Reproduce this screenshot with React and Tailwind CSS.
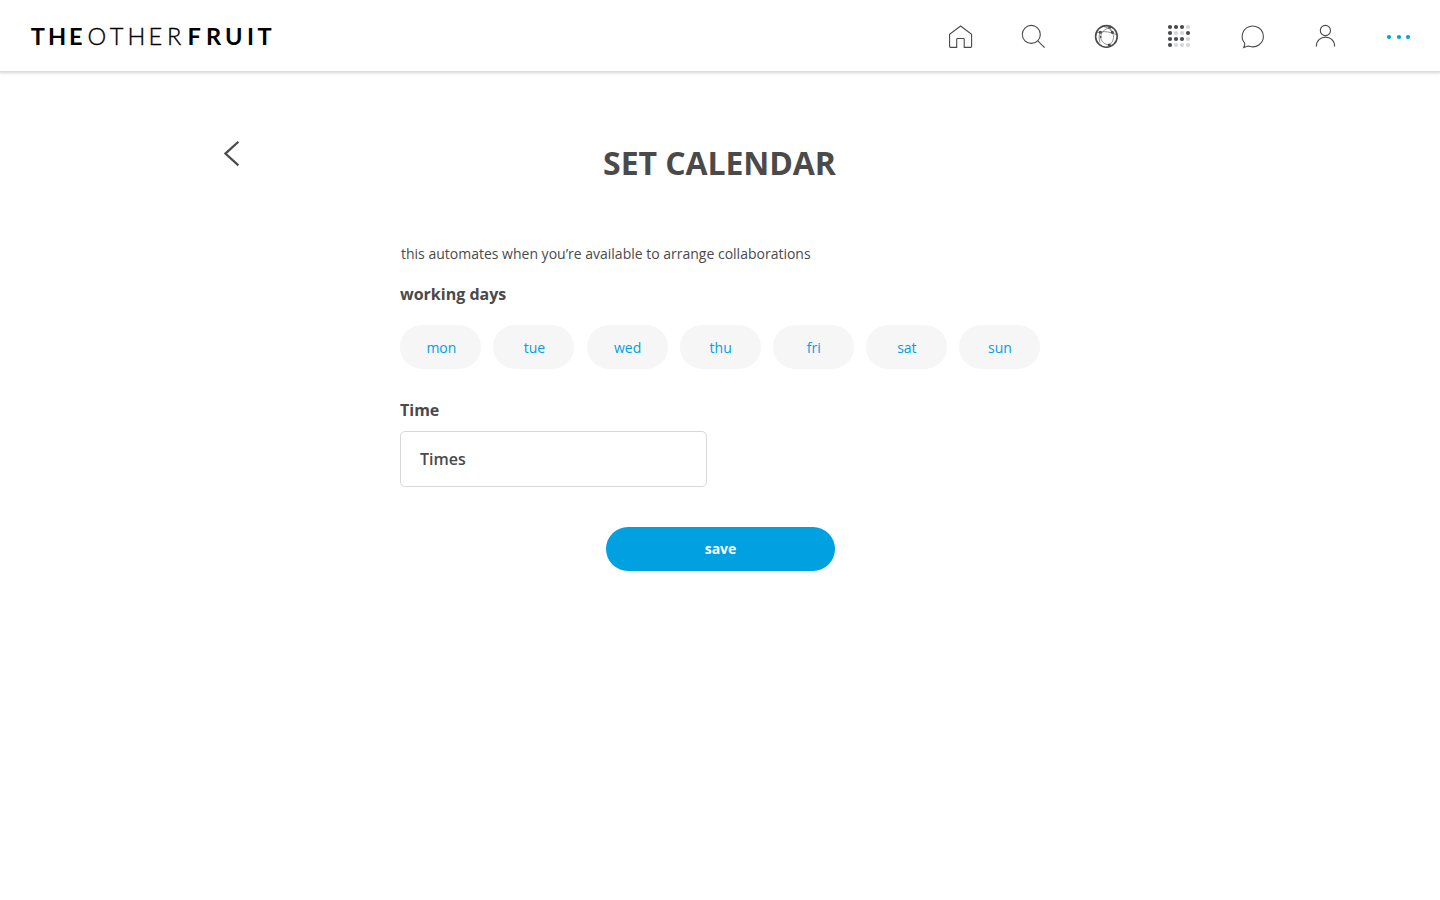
const DAYS = ["mon", "tue", "wed", "thu", "fri", "sat", "sun"];

const GRID = ["1110", "1001", "1110", "1000"];

function Icon({ label, children }) {
  return (
    <a href="#" aria-label={label} className="block h-[25px] w-[25px]">
      <svg width="25" height="25" viewBox="0 0 25 25" fill="none" stroke="#4a4a4a" strokeWidth="1.1">
        {children}
      </svg>
    </a>
  );
}

function Logo() {
  return (
    <svg width="250" height="30" viewBox="0 0 250 30" fill="#000" fontFamily="Lato, sans-serif" fontSize="23.6">
      <text y="23.2" fontWeight="700" x="0.7 18.1 38.9">THE</text>
      <text y="23.2" fontWeight="300" stroke="#000" strokeWidth="0.35" x="57.4 79.8 97.6 118.5 137.1">OTHER</text>
      <text y="23.2" fontWeight="700" x="157.4 175.9 195 216.9 227.6">FRUIT</text>
    </svg>
  );
}

function Header() {
  return (
    <header className="flex h-[71px] items-center justify-between bg-white pt-[2px] pr-[29px] pl-[30px] shadow-[0_1px_3px_1px_rgba(0,0,0,0.17)]">
      <Logo />
      <nav className="flex gap-12">
        <Icon label="home">
          <path d="M1.6 22.6V10.2L12.6 2L23.6 10.2V22.6Q23.6 23.4 22.8 23.4H16.2V15.2Q16.2 14.5 15.5 14.5H9.4Q8.7 14.5 8.7 15.2V23.4H2.4Q1.6 23.4 1.6 22.6Z" />
        </Icon>
        <Icon label="search">
          <circle cx="10.3" cy="10.4" r="9" />
          <path d="M16.8 16.8L23.6 23.6" />
        </Icon>
        <Icon label="network">
          <circle cx="12.4" cy="12.4" r="10.8" strokeWidth="1.6" />
          <g strokeWidth="0.6">
            <path d="M15.7 3.4C10 5.5 6.7 9 6.7 13C6.9 17.5 10.5 20.5 15.3 21" />
            <path d="M9.5 2.5C16 4 20 8.5 19.5 13.5C19.2 17 17.5 19.5 15.3 21" />
            <path d="M2.5 8.8C7 7.2 14 6.8 22 10.5" />
            <path d="M6.3 8.3C4.8 11 4.8 15 6 18.8M15.7 3.4L18.3 8.3" />
          </g>
          <g fill="#4a4a4a" stroke="none">
            <circle cx="15.7" cy="3.4" r="1.3" />
            <circle cx="6.3" cy="8.3" r="1.5" />
            <circle cx="18.3" cy="8.3" r="1.5" />
            <circle cx="6.7" cy="13" r="0.9" />
            <circle cx="15.3" cy="21" r="1.6" />
          </g>
        </Icon>
        <Icon label="projects">
          {GRID.flatMap((row, r) =>
            row.split("").map((on, c) => (
              <circle
                key={`${r}-${c}`}
                cx={3 + c * 6}
                cy={3 + r * 6}
                r="2.1"
                stroke="none"
                fill={on === "1" ? "#4a4a4a" : "#d3d7da"}
              />
            ))
          )}
        </Icon>
        <Icon label="messages">
          <path d="M4.7 19.2A10.6 10.4 0 1 1 9.4 22.3Q8 21.9 6.6 22.5L3.8 23.4Q4.9 21.6 4.7 19.2Z" />
        </Icon>
        <Icon label="profile">
          <circle cx="12.4" cy="6.5" r="5.1" />
          <path d="M3.3 22.6C3.6 9.9 21.4 9.9 21.7 22.6" />
        </Icon>
        <Icon label="more">
          <g fill="#00a0e1" stroke="none">
            <circle cx="3" cy="13" r="2.1" />
            <circle cx="13" cy="13" r="2.1" />
            <circle cx="22" cy="13" r="2.1" />
          </g>
        </Icon>
      </nav>
    </header>
  );
}

export default function App() {
  return (
    <div className="min-h-screen bg-white font-['Open_Sans',sans-serif] text-[#4a4a4a]">
      <Header />
      <main className="mx-auto grid w-[1000px] grid-cols-[180px_640px_180px] pt-[68px]">
        <button aria-label="back" className="h-7 w-6 self-start">
          <svg width="24" height="28" viewBox="0 0 24 28" fill="none" stroke="#4a4a4a" strokeWidth="2.2">
            <path d="M18.4 2.8L5.4 14.6L18.4 26.4" />
          </svg>
        </button>
        <section className="flex flex-col items-start">
          <h1 className="self-center pr-px text-[32px] leading-[48px] font-bold tracking-[-0.08px]">SET CALENDAR</h1>
          <p className="mt-[57px] text-sm leading-5 pl-px">this automates when you’re available to arrange collaborations</p>
          <h2 className="mt-[18px] text-base leading-6 font-bold">working days</h2>
          <div className="mt-[19px] flex w-full justify-between pl-[0.4px]">
            {DAYS.map((day) => (
              <button key={day} className="h-11 w-[81px] rounded-full bg-[#f6f6f6] pt-0.5 pl-px text-sm text-[#00a0e1]">
                {day}
              </button>
            ))}
          </div>
          <h2 className="mt-[29px] text-base leading-6 font-bold">Time</h2>
          <button className="mt-[9px] h-14 w-[307px] rounded-[5px] border border-[#d8d8d8] pl-[19px] text-left text-base font-semibold">
            Times
          </button>
          <button className="mt-10 ml-[206px] h-11 w-[229px] rounded-full bg-[#00a0e1] text-sm font-bold text-white">
            save
          </button>
        </section>
      </main>
    </div>
  );
}
